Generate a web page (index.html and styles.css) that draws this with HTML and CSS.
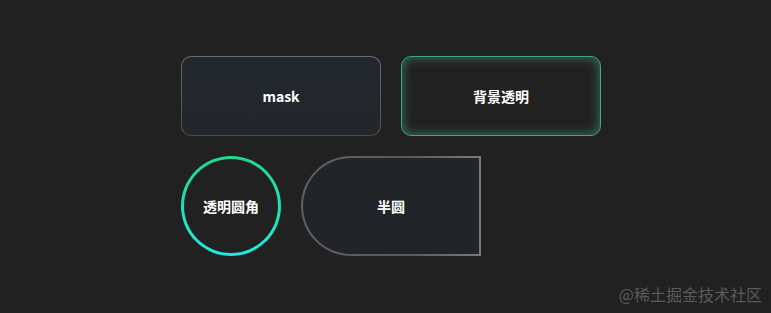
FILE: index.html
```html
<!DOCTYPE html>
<html lang="zh-CN">
<head>
  <meta charset="UTF-8" />
  <meta name="viewport" content="width=device-width, initial-scale=1" />
  <title>边框样式</title>
  <link rel="stylesheet" href="styles.css">
</head>
<body>
  <div class="container">
    <div class="row">
      <div class="box mask">mask</div>
      <div class="box glow">背景透明</div>
    </div>
    <div class="row">
      <div class="box circle">透明圆角</div>
      <div class="box half">半圆</div>
    </div>
  </div>
  <div class="watermark">@稀土掘金技术社区</div>
</body>
</html>
```

FILE: styles.css
```css
body {
  font-family: "Noto Sans CJK SC", "Noto Sans", sans-serif;
  margin: 0;
  padding: 0;
  background-color: #212121;
  color: #fff;
  width: 771px;
  height: 313px;
  overflow: hidden;
  position: relative;
}

.container {
  padding: 56px 0 0 181px;
  display: flex;
  flex-direction: column;
  gap: 20px;
}

.row {
  display: flex;
  gap: 20px;
}

.box {
  box-sizing: border-box;
  display: flex;
  align-items: center;
  justify-content: center;
  font-size: 14px;
  font-weight: 700;
}

.mask {
  width: 200px;
  height: 80px;
  border-radius: 10px;
  border: 1px solid transparent;
  background:
    linear-gradient(#23282e, #23272c) padding-box,
    linear-gradient(#6a6d70, #4a4d50) border-box;
}

.glow {
  width: 200px;
  height: 80px;
  border-radius: 10px;
  border: 1px solid #3fa88c;
  background-color: #212121;
  box-shadow: inset 0 0 12px rgba(70, 180, 150, 0.6);
}

.circle {
  width: 100px;
  height: 100px;
  border-radius: 50%;
  border: 3px solid transparent;
  background:
    linear-gradient(#212121, #212121) padding-box,
    linear-gradient(#21d98a, #22e8e2) border-box;
}

.half {
  width: 180px;
  height: 100px;
  border-radius: 50px 0 0 50px;
  border: 2px solid transparent;
  background:
    linear-gradient(#222527, #222527) padding-box,
    linear-gradient(90deg, #606060, #5a5a5a 60%, #7a7a7a) border-box;
}

.watermark {
  position: absolute;
  right: 9px;
  bottom: 7px;
  font-size: 16px;
  color: #5a5a5a;
}
```
